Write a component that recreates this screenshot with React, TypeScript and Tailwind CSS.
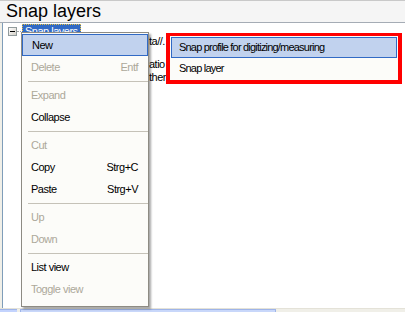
import React from "react";

type Item = { label: string; shortcut?: string; disabled?: boolean; active?: boolean } | "sep";

const items: Item[] = [
  { label: "New", active: true },
  { label: "Delete", shortcut: "Entf", disabled: true },
  "sep",
  { label: "Expand", disabled: true },
  { label: "Collapse" },
  "sep",
  { label: "Cut", disabled: true },
  { label: "Copy", shortcut: "Strg+C" },
  { label: "Paste", shortcut: "Strg+V" },
  "sep",
  { label: "Up", disabled: true },
  { label: "Down", disabled: true },
  "sep",
  { label: "List view" },
  { label: "Toggle view", disabled: true },
];

function MinusBox() {
  return (
    <div className="w-[9px] h-[9px] border border-[#919b9c] bg-gradient-to-br from-white to-[#d4d0c8] flex items-center justify-center">
      <div className="w-[5px] h-[1px] bg-black" />
    </div>
  );
}

export default function App() {
  return (
    <div className="relative w-[405px] h-[312px] overflow-hidden bg-white font-['Liberation_Sans',Arial,sans-serif] flex flex-col">
      {/* Header */}
      <div className="h-[23px] shrink-0 bg-[#f5f5f5] border-t border-[#c9c9c9] border-b border-b-[#a5acb5] pl-[6px] text-[18px] leading-[21px] text-black">
        Snap layers
      </div>

      {/* Tree panel */}
      <div className="flex-1 flex bg-[#f0efe8]">
        <div className="ml-[2px] flex-1 border-l border-[#7f9db9] bg-white flex">
          <div className="w-[146px] flex items-start pl-[5px] pt-[1px]">
            <div className="pt-[3px]">
              <MinusBox />
            </div>
            <div className="w-[4px] mt-[7px] border-t border-dotted border-[#a0a0a0]" />
            <div className="ml-[1px] h-[15px] bg-[#316ac5] border border-dotted border-[#e8c040] px-[2px] text-[11px] tracking-[-0.5px] leading-[13px] text-white">
              Snap layers
            </div>
          </div>

          {/* detail text, mostly hidden behind the menus */}
          <div className="pt-[12px] text-[11px] leading-[13px] tracking-[-0.5px] text-black whitespace-nowrap">
            <div>ta//.</div>
            <div className="mt-[10px]">atio</div>
            <div>ther</div>
          </div>
        </div>
      </div>

      {/* Horizontal scrollbar */}
      <div className="h-[4px] shrink-0 bg-[#f0efe8] border-t border-[#e4e2d8] flex">
        <div className="w-[17px] bg-[#c3d3fd] border-t border-[#9eb4e8]" />
        <div className="ml-[3px] w-[256px] bg-[#c8d7fa] border-t border-l border-r border-[#9eb4e8]" />
      </div>

      {/* Context menu */}
      <div className="absolute left-[21px] top-[32px] w-[128px] border border-[#8d8b83] bg-[#fcfcf9] pt-[1px] pb-[6px] shadow-[2px_2px_2px_rgba(0,0,0,0.35)] text-[11px] tracking-[-0.5px]">
        {items.map((it, i) =>
          it === "sep" ? (
            <div key={i} className="h-[6px] flex items-center pl-[6px]">
              <div className="w-full h-[1px] bg-[#c5c2b8]" />
            </div>
          ) : (
            <div
              key={i}
              className={
                "h-[22px] flex items-center justify-between pl-[9px] pr-[10px] " +
                (it.active ? "bg-[#c1d2ee] border border-[#316ac5] pl-[8px] pr-[9px] " : "") +
                (it.disabled ? "text-[#aca899]" : "text-black")
              }
            >
              <span>{it.label}</span>
              {it.shortcut && <span>{it.shortcut}</span>}
            </div>
          )
        )}
      </div>

      {/* Submenu, marked with a red frame */}
      <div className="absolute left-[166px] top-[33px] w-[236px] h-[51px] border-[4px] border-t-[3px] border-[#ff0000]">
        <div className="h-full bg-[#fcfcf9] pt-[1px] px-[1px] text-[11px] tracking-[-0.8px] text-black">
          <div className="h-[21px] flex items-center pl-[7px] bg-[#c1d2ee] border border-[#316ac5]">
            Snap profile for digitizing/measuring
          </div>
          <div className="h-[21px] flex items-center pl-[8px]">Snap layer</div>
        </div>
      </div>
    </div>
  );
}
